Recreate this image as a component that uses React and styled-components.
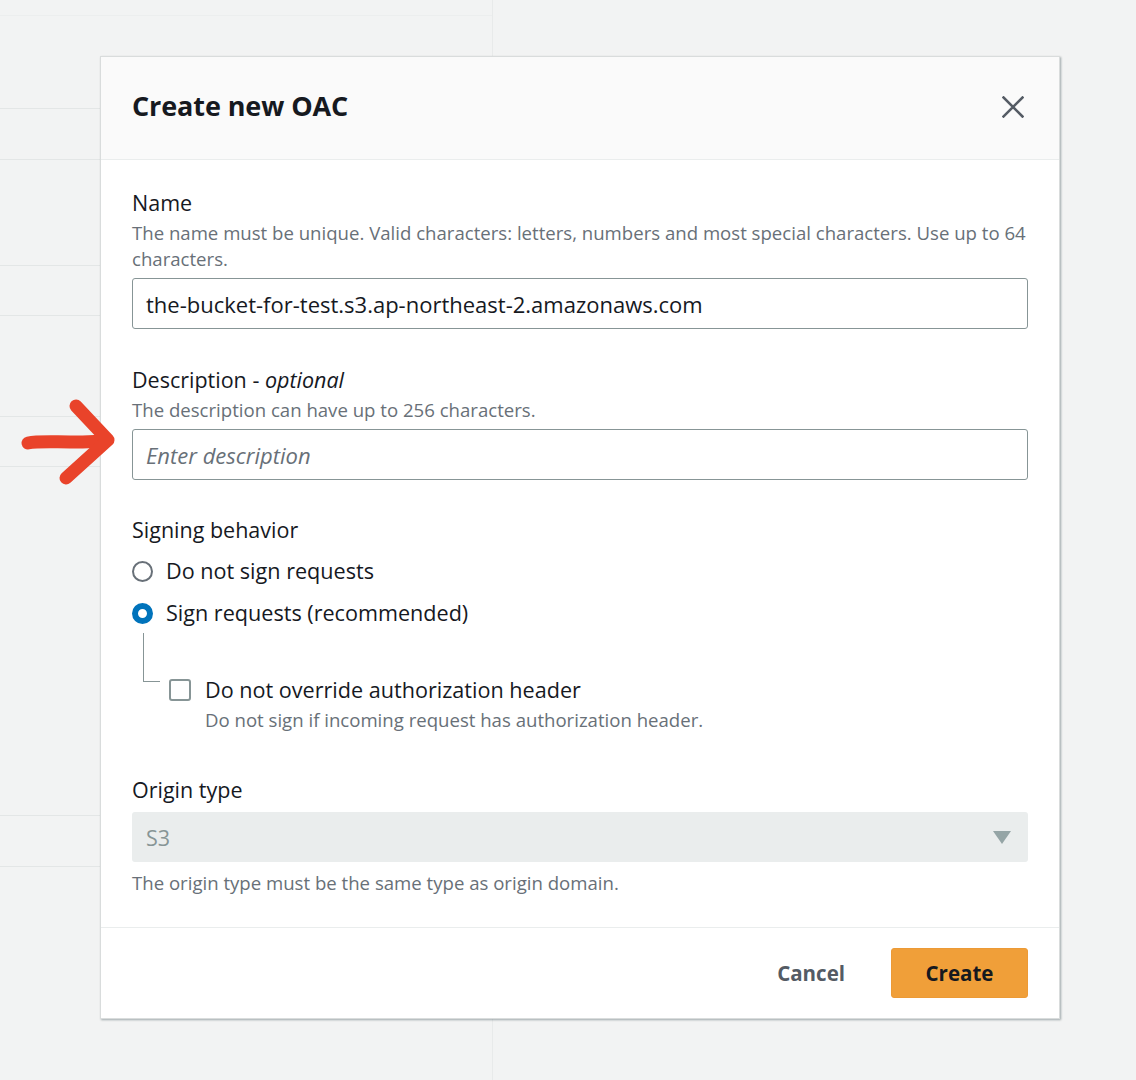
import React from "react";
import styled, { createGlobalStyle } from "styled-components";

const GlobalStyle = createGlobalStyle`
  html, body {
    margin: 0;
    padding: 0;
    background: #f2f3f3;
  }
  body {
    font-family: "Open Sans", "Noto Sans", Arial, sans-serif;
    color: #16191f;
  }
  * { box-sizing: border-box; }
`;

const Page = styled.div`
  position: relative;
  width: 1136px;
  height: 1080px;
  overflow: hidden;
  background: #f2f3f3;
`;

const Backdrop = styled.div`
  display: flex;
  height: 100%;
`;

const LeftPane = styled.div`
  width: 493px;
  height: 100%;
  border-right: 1px solid #e8eaea;
  display: flex;
  flex-direction: column;
`;

const BgRow = styled.div`
  height: ${(p) => p.$h}px;
  flex: none;
  border-bottom: 1px solid ${(p) => (p.$faint ? "#eceeee" : "#e3e6e6")};
`;

const Modal = styled.div`
  position: absolute;
  top: 56px;
  left: 100px;
  width: 960px;
  background: #ffffff;
  border: 1px solid #d9dcdc;
  box-shadow: 1px 1px 2px rgba(0, 28, 36, 0.35);
  display: flex;
  flex-direction: column;
`;

const Header = styled.div`
  height: 103px;
  background: #fafafa;
  border-bottom: 1px solid #eaeded;
  display: flex;
  align-items: center;
  justify-content: space-between;
  padding: 0 35px 6px 31px;
`;

const Title = styled.h2`
  margin: 0;
  font-size: 27px;
  font-weight: 700;
  color: #16191f;
  letter-spacing: -0.1px;
`;

const CloseButton = styled.button`
  border: none;
  background: none;
  padding: 0;
  width: 22px;
  height: 22px;
  display: flex;
  align-items: center;
  justify-content: center;
  margin-top: 4px;
  cursor: pointer;
`;

const Body = styled.div`
  padding: 30px 31px 31px 31px;
  display: flex;
  flex-direction: column;
`;

const Field = styled.div`
  display: flex;
  flex-direction: column;
  margin-top: ${(p) => p.$mt || 0}px;
`;

const Label = styled.div`
  font-size: 21.5px;
  line-height: 26px;
  color: #16191f;
  em {
    font-style: italic;
  }
`;

const Help = styled.div`
  margin-top: 4px;
  font-size: 18.6px;
  line-height: 26px;
  color: #687078;
`;

const TextInput = styled.div`
  margin-top: 6px;
  height: 51px;
  border: 1px solid #879596;
  border-radius: 3px;
  display: flex;
  align-items: center;
  padding: 0 13px;
  font-size: 22px;
  color: ${(p) => (p.$placeholder ? "#687078" : "#16191f")};
  font-style: ${(p) => (p.$placeholder ? "italic" : "normal")};
`;

const Options = styled.div`
  display: flex;
  flex-direction: column;
  margin-top: 15px;
  gap: 16px;
`;

const Option = styled.label`
  display: flex;
  align-items: center;
  gap: 13px;
  font-size: 21.6px;
  line-height: 26px;
  color: #16191f;
`;

const Radio = styled.span`
  width: 21px;
  height: 21px;
  border-radius: 50%;
  flex: none;
  border: ${(p) => (p.$checked ? "6.5px solid #0073bb" : "2px solid #687078")};
  background: #ffffff;
`;

const SubOption = styled.div`
  display: flex;
  margin-left: 11px;
`;

const TreeLine = styled.div`
  width: 17px;
  height: 49px;
  margin-top: 7px;
  flex: none;
  border-left: 1px solid #879596;
  border-bottom: 1px solid #879596;
`;

const SubContent = styled.div`
  display: flex;
  gap: 14px;
  margin-top: 51px;
  margin-left: 9px;
`;

const Checkbox = styled.span`
  width: 22px;
  height: 22px;
  flex: none;
  margin-top: 2px;
  border: 2px solid #879596;
  border-radius: 3px;
  background: #ffffff;
`;

const SubText = styled.div`
  display: flex;
  flex-direction: column;
`;

const CheckLabel = styled.div`
  font-size: 21.6px;
  line-height: 26px;
  color: #16191f;
`;

const SubHelp = styled.div`
  font-size: 18.6px;
  line-height: 26px;
  color: #687078;
  margin-top: 4px;
`;

const Select = styled.div`
  margin-top: 9px;
  height: 50px;
  background: #eaeded;
  border-radius: 3px;
  display: flex;
  align-items: center;
  justify-content: space-between;
  padding: 0 17px 0 14px;
  font-size: 21.5px;
  color: #879596;
`;

const SelectHelp = styled(Help)`
  margin-top: 8px;
`;

const Footer = styled.div`
  border-top: 1px solid #eaeded;
  height: 91px;
  display: flex;
  align-items: center;
  justify-content: flex-end;
  gap: 26px;
  padding: 0 31px 1px 0;
`;

const Button = styled.button`
  font-family: inherit;
  font-size: 20.5px;
  font-weight: 700;
  height: 50px;
  border-radius: 3px;
  cursor: pointer;
  border: ${(p) => (p.$primary ? "1px solid #ec9a36" : "none")};
  background: ${(p) => (p.$primary ? "#f09f39" : "transparent")};
  color: ${(p) => (p.$primary ? "#16191f" : "#545b64")};
  padding: ${(p) => (p.$primary ? "0 30px" : "0 20px")};
  min-width: ${(p) => (p.$primary ? "137px" : "0")};
`;

const ArrowMark = styled.svg`
  position: absolute;
  left: 18px;
  top: 392px;
`;

const bgRows = [
  { h: 16, faint: true },
  { h: 93 },
  { h: 51 },
  { h: 106 },
  { h: 50 },
  { h: 101 },
  { h: 50 },
  { h: 349 },
  { h: 51 },
];

export default function App() {
  return (
    <Page>
      <GlobalStyle />
      <Backdrop>
        <LeftPane>
          {bgRows.map((r, i) => (
            <BgRow key={i} $h={r.h} $faint={r.faint} />
          ))}
        </LeftPane>
      </Backdrop>

      <Modal>
        <Header>
          <Title>Create new OAC</Title>
          <CloseButton aria-label="Close">
            <svg width="22" height="22" viewBox="0 0 22 22">
              <path d="M1.5 1.5 L20.5 20.5 M20.5 1.5 L1.5 20.5" stroke="#545b64" strokeWidth="2.5" strokeLinecap="square" />
            </svg>
          </CloseButton>
        </Header>

        <Body>
          <Field>
            <Label>Name</Label>
            <Help>
              The name must be unique. Valid characters: letters, numbers and most special characters. Use up to 64
              characters.
            </Help>
            <TextInput>the-bucket-for-test.s3.ap-northeast-2.amazonaws.com</TextInput>
          </Field>

          <Field $mt={38}>
            <Label>
              Description - <em>optional</em>
            </Label>
            <Help>The description can have up to 256 characters.</Help>
            <TextInput $placeholder>Enter description</TextInput>
          </Field>

          <Field $mt={37}>
            <Label>Signing behavior</Label>
            <Options>
              <Option>
                <Radio />
                Do not sign requests
              </Option>
              <Option>
                <Radio $checked />
                Sign requests (recommended)
              </Option>
            </Options>
            <SubOption>
              <TreeLine />
              <SubContent>
                <Checkbox />
                <SubText>
                  <CheckLabel>Do not override authorization header</CheckLabel>
                  <SubHelp>Do not sign if incoming request has authorization header.</SubHelp>
                </SubText>
              </SubContent>
            </SubOption>
          </Field>

          <Field $mt={44}>
            <Label>Origin type</Label>
            <Select>
              <span>S3</span>
              <svg width="18" height="13" viewBox="0 0 18 13">
                <path d="M0 0 L18 0 L9 13 Z" fill="#95a5a6" />
              </svg>
            </Select>
            <SelectHelp>The origin type must be the same type as origin domain.</SelectHelp>
          </Field>
        </Body>

        <Footer>
          <Button>Cancel</Button>
          <Button $primary>Create</Button>
        </Footer>
      </Modal>

      <ArrowMark width="110" height="105" viewBox="0 0 110 105">
        <g fill="none" stroke="#e9432a" strokeWidth="13" strokeLinecap="round" strokeLinejoin="round">
          <path d="M10 51 C 20 49, 35 50, 55 50 C 70 50, 80 49, 88 49" />
          <path d="M58 14 L 90 48 L 48 86" />
        </g>
      </ArrowMark>
    </Page>
  );
}
